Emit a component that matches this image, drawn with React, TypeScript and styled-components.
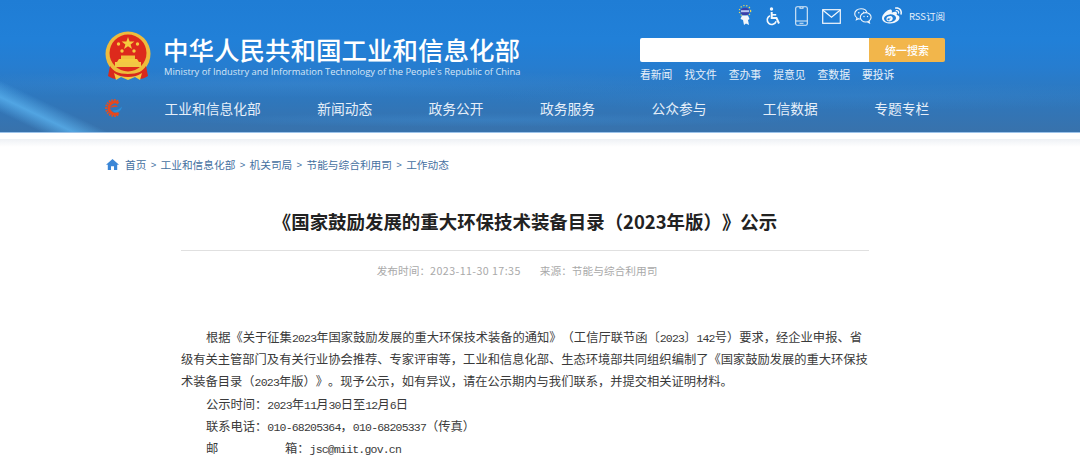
import React from "react";
import styled, { createGlobalStyle } from "styled-components";
import { FaWeibo } from "react-icons/fa";

const cjk = `"Noto Sans CJK SC", "Liberation Sans", sans-serif`;

const GlobalStyle = createGlobalStyle`
  html, body {
    margin: 0;
    height: 463px;
    overflow: hidden;
    background: #ffffff;
    font-family: ${cjk};
    text-spacing-trim: space-all;
  }
`;

const NAV = ["工业和信息化部", "新闻动态", "政务公开", "政务服务", "公众参与", "工信数据", "专题专栏"];
const QUICK = ["看新闻", "找文件", "查办事", "提意见", "查数据", "要投诉"];
const CRUMBS = ["工业和信息化部", "机关司局", "节能与综合利用司", "工作动态"];

const Emblem = () => (
  <svg width="48" height="52" viewBox="0 0 48 52">
    <circle cx="24" cy="23" r="22.5" fill="#eebc3c" />
    <circle cx="24" cy="22" r="18.500" fill="#dd2a1c" />
    <polygon points="24,6 25.6,10.6 30.4,10.6 26.6,13.5 28,18 24,15.300 20,18 21.400,13.500 17.600,10.600 22.400,10.600" fill="#f5cb3f" />
    <circle cx="14.500" cy="13" r="1.700" fill="#f5cb3f" />
    <circle cx="33.500" cy="13" r="1.700" fill="#f5cb3f" />
    <circle cx="18" cy="20" r="1.700" fill="#f5cb3f" />
    <circle cx="30" cy="20" r="1.700" fill="#f5cb3f" />
    <path d="M15 28h18l2 3H13z" fill="#f5cb3f" />
    <rect x="17" y="24.500" width="14" height="3.500" fill="#f0c23b" />
    <rect x="11" y="31" width="26" height="5" fill="#f2c844" />
    <path d="M6 35c3 5 8 8 18 8s15-3 18-8l2 10c-3 2-6 3-8 3l-4-3-8 2-8-2-4 3c-2 0-5-1-8-3z" fill="#d8291c" />
    <path d="M10 42c5 3 9 4 14 4s9-1 14-4l-2 7-5-3-7 3-7-3-5 3z" fill="#f2c844" />
  </svg>
);

const NavLogo = () => (
  <svg width="20" height="20" viewBox="0 0 20 20">
    <path d="M14 3.200A7.900 7.900 0 1 0 14 16.800" fill="none" stroke="#e8501e" strokeWidth="2" strokeDasharray="1.500 1.100" />
    <path d="M14.500 5.200A6 6 0 1 0 14.500 14.800" fill="none" stroke="#e8471c" strokeWidth="3" />
    <path d="M6 9.800c2.500-2.800 6-3.200 8-1.200-2 .2-4 .8-8 1.200z" fill="#e8471c" />
    <path d="M8.500 12.500c3.500 .4 7-1 9.500-4-.6 3.500-3 6-6 6-1.400 0-2.700-.7-3.500-2z" fill="#2c8fd8" />
  </svg>
);

const Robot = () => (
  <svg width="14" height="22" viewBox="0 0 14 22">
    <circle cx="7" cy="6" r="5.600" fill="none" stroke="#ecd75a" strokeWidth="1.300" strokeDasharray="1.200 1.800" />
    <ellipse cx="7" cy="6.500" rx="4.400" ry="3.700" fill="#3a3fa8" />
    <rect x="3" y="5.200" width="8" height="2" fill="#b9c7f2" />
    <path d="M4 10.500h6l1.500 3.500-1.500 1 1 5-3-1.500-2 1.500-1-5-2.500-1z" fill="#f2f6fb" />
  </svg>
);

const Wheelchair = () => (
  <svg width="15" height="19" viewBox="0 0 15 19" fill="none" stroke="#f4f8fc" strokeWidth="1.600">
    <circle cx="5.500" cy="2" r="1.700" fill="#f4f8fc" stroke="none" />
    <path d="M5.700 5v6h4.800l2.500 5.500" strokeWidth="2" />
    <path d="M5.800 7.800h4.400" />
    <path d="M3.900 8.700a4.600 4.600 0 1 0 6.300 5.600" />
  </svg>
);

const Phone = () => (
  <svg width="13" height="20" viewBox="0 0 13 20" fill="none" stroke="#dcebf8" strokeWidth="1.100">
    <rect x=".7" y=".7" width="11.600" height="18.600" rx="1.500" />
    <path d="M.7 15h11.600M4.500 17.200h4" />
    <path d="M5 .9v1.300h3V.9" />
  </svg>
);

const Mail = () => (
  <svg width="19" height="15" viewBox="0 0 19 15" fill="none" stroke="#f4f8fc" strokeWidth="1.200">
    <rect x=".7" y=".7" width="17.600" height="13.600" />
    <path d="M1 1.300l8.500 7 8.500-7" />
  </svg>
);

const Wechat = () => (
  <svg width="18" height="16" viewBox="0 0 18 16" fill="none" stroke="#f1f6fb" strokeWidth="1.100">
    <path d="M7 .8C3.500.8.700 3 .7 5.900c0 1.700 1 3.100 2.300 4l-.6 1.900 2.200-1.100c.6.200 1.200.3 1.800.3" />
    <path d="M7 .8c2.900 0 5.400 1.600 6 3.900" />
    <ellipse cx="11.700" cy="9.300" rx="5.400" ry="4.700" />
    <path d="M15 13l.5 2-2-1" />
    <circle cx="4.800" cy="4.800" r=".8" fill="#f1f6fb" stroke="none" />
    <circle cx="9.500" cy="4.200" r=".7" fill="#f1f6fb" stroke="none" />
    <circle cx="10" cy="8.500" r=".7" fill="#f1f6fb" stroke="none" />
    <circle cx="13.500" cy="8.500" r=".7" fill="#f1f6fb" stroke="none" />
  </svg>
);

const Home = () => (
  <svg width="13" height="11" viewBox="0 0 13 11">
    <path d="M6.500 0L13 5.800h-1.800V11H8V7.300H5V11H1.800V5.800H0z" fill="#3b86d6" />
  </svg>
);

export default function App() {
  return (
    <Page>
      <GlobalStyle />
      <Header>
        <TopRow>
          <Brand>
            <Emblem />
            <BrandText>
              <SiteName>中华人民共和国工业和信息化部</SiteName>
              <SiteNameEn>Ministry of Industry and Information Technology of the People's Republic of China</SiteNameEn>
            </BrandText>
          </Brand>
          <Tools>
            <IconRow>
              <Robot />
              <Wheelchair />
              <Phone />
              <Mail />
              <IconSlot $shift={-1}>
                <Wechat />
              </IconSlot>
              <IconSlot $shift={-4}>
                <FaWeibo size={20} color="#f4f8fc" />
              </IconSlot>
              <Rss>RSS订阅</Rss>
            </IconRow>
            <Search>
              <SearchInput />
              <SearchButton>统一搜索</SearchButton>
            </Search>
            <QuickLinks>
              {QUICK.map((q) => (
                <span key={q}>{q}</span>
              ))}
            </QuickLinks>
          </Tools>
        </TopRow>
        <Nav>
          <NavLogoBox>
            <NavLogo />
          </NavLogoBox>
          {NAV.map((n) => (
            <NavItem key={n}>{n}</NavItem>
          ))}
        </Nav>
      </Header>
      <Shadow />
      <Breadcrumb>
        <Home />
        <Crumb>首页</Crumb>
        {CRUMBS.map((c) => (
          <React.Fragment key={c}>
            <Sep>&gt;</Sep>
            <Crumb>{c}</Crumb>
          </React.Fragment>
        ))}
      </Breadcrumb>
      <Article>
        <Title>《国家鼓励发展的重大环保技术装备目录（2023年版）》公示</Title>
        <Meta>
          <span>
            发布时间：<MetaTime>2023-11-30 17:35</MetaTime>
          </span>
          <span>来源：节能与综合利用司</span>
        </Meta>
        <Body>
          <Para>
            根据《关于征集<Latin>2023</Latin>年国家鼓励发展的重大环保技术装备的通知》（工信厅联节函〔<Latin>2023</Latin>〕<Latin>142</Latin>号）要求，经企业申报、省级有关主管部门及有关行业协会推荐、专家评审等，工业和信息化部、生态环境部共同组织编制了《国家鼓励发展的重大环保技术装备目录（<Latin>2023</Latin>年版）》。现予公示，如有异议，请在公示期内与我们联系，并提交相关证明材料。
          </Para>
          <Para>
            公示时间：<Latin>2023</Latin>年<Latin>11</Latin>月<Latin>30</Latin>日至<Latin>12</Latin>月<Latin>6</Latin>日
          </Para>
          <Para>
            联系电话：<Latin>010-68205364</Latin>，<Latin>010-68205337</Latin>（传真）
          </Para>
          <Para>
            <MailLabel>邮</MailLabel>箱：<Latin>jsc@miit.gov.cn</Latin>
          </Para>
        </Body>
      </Article>
    </Page>
  );
}

const Page = styled.div`
  width: 1080px;
  height: 463px;
  overflow: hidden;
`;

const Header = styled.header`
  height: 132px;
  display: flex;
  flex-direction: column;
  padding: 0 135px 0 104px;
  border-bottom: 1px solid #9cc3ea;
  background-color: #2178cd;
  background-image:
    linear-gradient(25.6deg, transparent 3%, rgba(95, 185, 245, 0.7) 5.4%, transparent 8%),
    radial-gradient(ellipse 320px 7px at 480px 120px, rgba(70, 160, 235, 0.22), transparent),
    radial-gradient(ellipse 380px 14px at 850px 96px, rgba(70, 155, 230, 0.14), transparent),
    radial-gradient(ellipse 420px 14px at 300px 84px, rgba(110, 175, 235, 0.12), transparent),
    linear-gradient(180deg, #1f7dd5 0%, #2180d8 30%, #267dd0 50%, #2c79c2 68%, #3275b6 84%, #3872ac 100%);
`;

const TopRow = styled.div`
  display: flex;
  justify-content: space-between;
  height: 90px;
`;

const Brand = styled.div`
  display: flex;
  align-items: flex-start;
  gap: 11px;
  padding-top: 31px;
`;

const BrandText = styled.div`
  display: flex;
  flex-direction: column;
`;

const SiteName = styled.div`
  font-size: 25.5px;
  font-weight: 500;
  line-height: 36px;
  color: #ffffff;
  white-space: nowrap;
`;

const SiteNameEn = styled.div`
  font-family: "Open Sans", "Liberation Sans", sans-serif;
  font-size: 9.38px;
  line-height: 13px;
  margin-top: -2px;
  margin-left: 1px;
  color: #d6e6f6;
  white-space: nowrap;
`;

const Tools = styled.div`
  width: 305px;
  display: flex;
  flex-direction: column;
  padding-top: 4px;
`;

const IconRow = styled.div`
  height: 24px;
  display: flex;
  align-items: center;
  justify-content: flex-end;
  gap: 14px;
  color: #ffffff;
`;

const IconSlot = styled.span<{ $shift: number }>`
  display: flex;
  margin-left: ${({ $shift }) => $shift}px;
`;

const Rss = styled.span`
  font-size: 9.5px;
  color: #e6f0fa;
  margin-left: -7px;
`;

const Search = styled.div`
  display: flex;
  height: 24px;
  margin-top: 10px;
  border-radius: 2px;
  overflow: hidden;
`;

const SearchInput = styled.div`
  flex: 1;
  background: #ffffff;
`;

const SearchButton = styled.div`
  width: 76px;
  display: flex;
  align-items: center;
  justify-content: center;
  background: #f2b64b;
  color: #ffffff;
  font-size: 11px;
  font-weight: 500;
`;

const QuickLinks = styled.div`
  display: flex;
  gap: 12px;
  margin-top: 4px;
  font-size: 10.8px;
  line-height: 16px;
  color: #e6f0fa;
`;

const Nav = styled.nav`
  display: flex;
  align-items: center;
  height: 35px;
  gap: 56.4px;
`;

const NavLogoBox = styled.div`
  width: 20px;
  display: flex;
  margin-right: -15.9px;
`;

const NavItem = styled.span`
  font-size: 13.75px;
  color: #e6eff9;
  white-space: nowrap;
`;

const Shadow = styled.div`
  height: 8px;
  margin-top: 6px;
  background: linear-gradient(180deg, #eef1f5, #ffffff);
`;

const Breadcrumb = styled.div`
  display: flex;
  align-items: center;
  height: 16px;
  margin-top: 9px;
  padding-left: 106px;
  font-size: 10.7px;
`;

const Crumb = styled.span`
  color: #44709f;
  &:nth-child(2) {
    margin-left: 6px;
  }
`;

const Sep = styled.span`
  font-family: "Liberation Sans", sans-serif;
  font-size: 9.5px;
  color: #44709f;
  margin: 0 4.3px;
`;

const Article = styled.main`
  width: 688px;
  margin: 0 0 0 181px;
`;

const Title = styled.h1`
  margin: 30px 0 0;
  height: 48px;
  border-bottom: 1px solid #e0e0e0;
  font-size: 18.45px;
  font-weight: 700;
  line-height: 38px;
  color: #222222;
  text-align: center;
  white-space: nowrap;
`;

const Meta = styled.div`
  display: flex;
  justify-content: center;
  gap: 19px;
  margin-top: 12px;
  padding-right: 16px;
  font-size: 10.7px;
  line-height: 16px;
  color: #a9a9a9;
`;

const MetaTime = styled.span`
  letter-spacing: 0.42px;
`;

const Body = styled.div`
  margin-top: 47px;
`;

const Para = styled.p`
  margin: 0;
  font-size: 12.27px;
  line-height: 22.2px;
  color: #3a3a3a;
  text-indent: 25px;
`;

const Latin = styled.span`
  font-family: "Liberation Mono", monospace;
  font-size: 11.5px;
  letter-spacing: -0.8px;
  line-height: 0;
`;

const MailLabel = styled.span`
  display: inline-block;
  width: 79px;
  text-indent: 0;
`;
